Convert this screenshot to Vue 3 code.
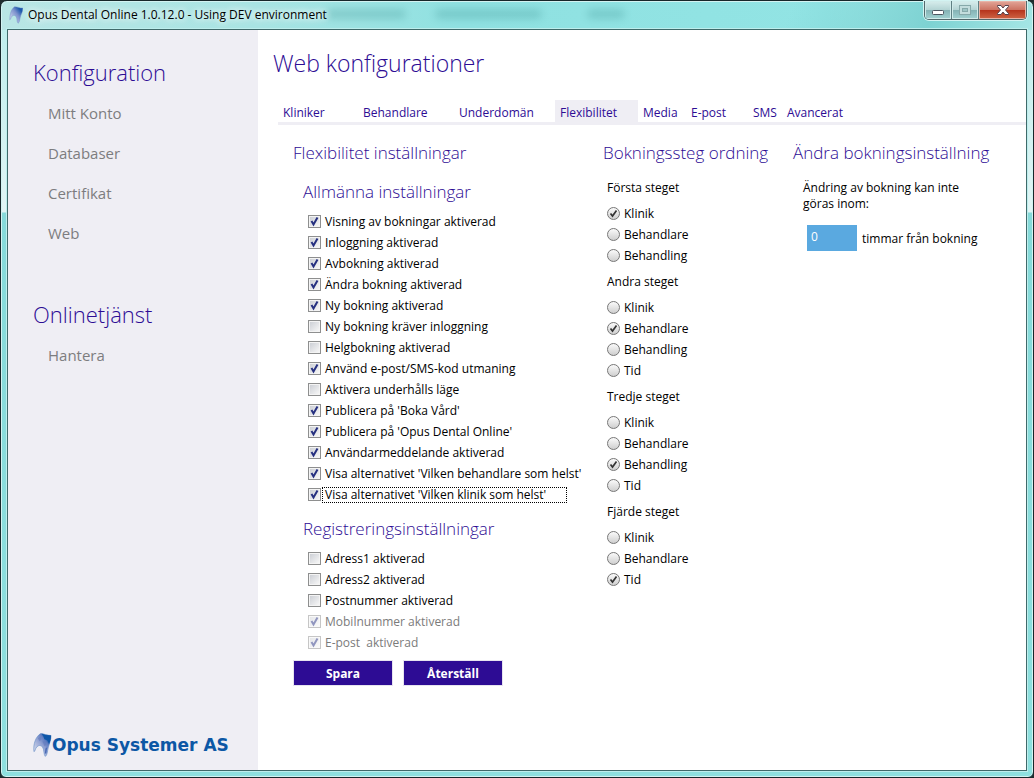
<script setup>
import { reactive, ref } from 'vue'

const menu = [
  { title: 'Konfiguration', items: ['Mitt Konto', 'Databaser', 'Certifikat', 'Web'] },
  { title: 'Onlinetjänst', items: ['Hantera'] },
]

const tabs = [
  { name: 'Kliniker', size: 'w80' },
  { name: 'Behandlare', size: 'w96' },
  { name: 'Underdomän', size: 'w101' },
  { name: 'Flexibilitet', size: 'w83' },
  { name: 'Media', size: 'w48' },
  { name: 'E-post', size: 'w62' },
  { name: 'SMS', size: 'w34' },
  { name: 'Avancerat', size: 'w80' },
]
const activeTab = ref('Flexibilitet')

const general = reactive([
  { label: 'Visning av bokningar aktiverad', on: true },
  { label: 'Inloggning aktiverad', on: true },
  { label: 'Avbokning aktiverad', on: true },
  { label: 'Ändra bokning aktiverad', on: true },
  { label: 'Ny bokning aktiverad', on: true },
  { label: 'Ny bokning kräver inloggning', on: false },
  { label: 'Helgbokning aktiverad', on: false },
  { label: 'Använd e-post/SMS-kod utmaning', on: true },
  { label: 'Aktivera underhålls läge', on: false },
  { label: "Publicera på 'Boka Vård'", on: true },
  { label: "Publicera på 'Opus Dental Online'", on: true },
  { label: 'Användarmeddelande aktiverad', on: true },
  { label: "Visa alternativet 'Vilken behandlare som helst'", on: true },
  { label: "Visa alternativet 'Vilken klinik som helst'", on: true, focused: true },
])

const registration = reactive([
  { label: 'Adress1 aktiverad', on: false },
  { label: 'Adress2 aktiverad', on: false },
  { label: 'Postnummer aktiverad', on: false },
  { label: 'Mobilnummer aktiverad', on: true, disabled: true },
  { label: 'E-post  aktiverad', on: true, disabled: true },
])

const steps = reactive([
  { title: 'Första steget', options: ['Klinik', 'Behandlare', 'Behandling'], value: 'Klinik' },
  { title: 'Andra steget', options: ['Klinik', 'Behandlare', 'Behandling', 'Tid'], value: 'Behandlare' },
  { title: 'Tredje steget', options: ['Klinik', 'Behandlare', 'Behandling', 'Tid'], value: 'Behandling' },
  { title: 'Fjärde steget', options: ['Klinik', 'Behandlare', 'Tid'], value: 'Tid' },
])

const hours = ref('0')
</script>

<template>
  <div class="window">
    <header class="titlebar">
      <div class="ghosts" aria-hidden="true"><i class="g1"></i><i class="g2"></i><i class="g3"></i></div>
      <svg class="app-icon" viewBox="0 0 20 26" aria-hidden="true">
        <defs>
          <linearGradient id="enamel-small" x1="0" y1="1" x2="1" y2="0">
            <stop offset="0.2" stop-color="#c3cdea" />
            <stop offset="0.55" stop-color="#7d92cd" />
            <stop offset="0.8" stop-color="#1c58ac" />
          </linearGradient>
        </defs>
        <path d="M1 20C1 12 3 4 8 1C12 1 15 3 20 3C20 9 17 12 16 17C15 21 15 24 13 25C11 23 12 18 10 15C8 13 6 13 4 15C2 17 3 19 1 20Z" fill="url(#enamel-small)" stroke="#6d8cc4" stroke-width="0.6" />
      </svg>
      <span class="title">Opus Dental Online 1.0.12.0 - Using DEV environment</span>
      <div class="controls">
        <button type="button" class="min" aria-label="Minimera">
          <svg viewBox="0 0 14 14"><rect x="1.500" y="7.500" width="11" height="4" rx="1" fill="#fff" stroke="#4c5560" /></svg>
        </button>
        <button type="button" class="max" aria-label="Maximera" disabled>
          <svg viewBox="0 0 14 14"><rect x="1.500" y="2.500" width="11" height="9" fill="#c3dddd" stroke="#86a9aa" /><rect x="4.500" y="5.500" width="5" height="3" fill="#9ec5c5" stroke="#86a9aa" /></svg>
        </button>
        <button type="button" class="close" aria-label="Stäng">
          <svg viewBox="0 0 14 14"><path d="M1.500 2.500H5L7 5L9 2.500H12.500V3.500L9.500 7L12.500 10.500V11.500H9L7 9L5 11.500H1.500V10.500L4.500 7L1.500 3.500Z" fill="#fff" stroke="#54414c" /></svg>
        </button>
      </div>
    </header>

    <div class="client">
      <nav class="sidebar">
        <section v-for="group in menu" :key="group.title">
          <h2>{{ group.title }}</h2>
          <ul>
            <li v-for="item in group.items" :key="item"><a href="#">{{ item }}</a></li>
          </ul>
        </section>
        <div class="logo">
          <svg viewBox="0 0 20 26" aria-hidden="true">
            <defs>
              <linearGradient id="enamel" x1="0" y1="1" x2="1" y2="0">
                <stop offset="0.2" stop-color="#c9d0e8" />
                <stop offset="0.5" stop-color="#8fa0d2" />
                <stop offset="0.68" stop-color="#5f7cc0" />
                <stop offset="0.8" stop-color="#0d56a8" />
              </linearGradient>
            </defs>
            <path d="M1 20C0 12 3 4 8 1C11 1 15 3 19 3C19 8 17 12 16 16C15 20 15 24 13 25C11 23 12 18 10 15C8 13 6 13 4 15C2 17 3 19 1 20Z" fill="url(#enamel)" stroke="#6d93c8" stroke-width="0.7" />
            <path d="M9 1C12 3 16 3 19 3C19 7 18 9 17 12L15 8L12 7L11 4Z" fill="#0d56a8" />
            <path d="M5 6L8 4L9 7L7 9ZM10 9L13 9L14 13L12 14Z" fill="#6279bd" opacity="0.6" />
            <path d="M13 17L15 15L14 22L12.500 22Z" fill="#4a6bb5" />
          </svg>
          <span>Opus Systemer AS</span>
        </div>
      </nav>

      <main>
        <h1>Web konfigurationer</h1>
        <div class="tabs" role="tablist">
          <button
            v-for="tab in tabs"
            :key="tab.name"
            type="button"
            role="tab"
            :class="[tab.size, { active: tab.name === activeTab }]"
            :aria-selected="tab.name === activeTab"
            @click="activeTab = tab.name"
          >{{ tab.name }}</button>
        </div>

        <div class="panels">
          <section>
            <h3>Flexibilitet inställningar</h3>
            <div class="group">
              <h3>Allmänna inställningar</h3>
              <div class="checks">
                <label v-for="c in general" :key="c.label" :class="{ focused: c.focused }">
                  <input v-model="c.on" type="checkbox" /><span>{{ c.label }}</span>
                </label>
              </div>
              <h3 class="second">Registreringsinställningar</h3>
              <div class="checks">
                <label v-for="c in registration" :key="c.label" :class="{ disabled: c.disabled }">
                  <input v-model="c.on" type="checkbox" :disabled="c.disabled" /><span>{{ c.label }}</span>
                </label>
              </div>
            </div>
            <div class="actions">
              <button type="button">Spara</button>
              <button type="button">Återställ</button>
            </div>
          </section>

          <section>
            <h3>Bokningssteg ordning</h3>
            <div class="steps">
              <fieldset v-for="(step, i) in steps" :key="step.title">
                <legend>{{ step.title }}</legend>
                <label v-for="o in step.options" :key="o">
                  <input v-model="step.value" type="radio" :name="'step' + i" :value="o" /><span>{{ o }}</span>
                </label>
              </fieldset>
            </div>
          </section>

          <section>
            <h3>Ändra bokningsinställning</h3>
            <div class="limit">
              <p>Ändring av bokning kan inte göras inom:</p>
              <label><input v-model="hours" type="text" /><span>timmar från bokning</span></label>
            </div>
          </section>
        </div>
      </main>
    </div>
  </div>
</template>

<style>
body {
  background: #1f2c2e;
}
</style>

<style scoped>
* {
  box-sizing: border-box;
}
.window {
  display: flex;
  flex-direction: column;
  min-height: 100vh;
  padding: 0 6px 6px;
  border: 1px solid #17272a;
  border-radius: 7px 7px 6px 6px;
  box-shadow: inset 0 0 0 1px #d3f3f2;
  background:
    linear-gradient(115deg, transparent 0 720px, #7dd2d2 850px, #abe9e8 960px, transparent 1040px) top / 100% 29px no-repeat,
    linear-gradient(90deg, #b9e6e5, #a8e4e3 25%, #8fe1e1 45%, #92e4e4 80%, #b5eeec) top / 100% 29px no-repeat,
    linear-gradient(#b9eceb, #e1f5f5 211px, #86dada 212px, #8ee0df);
  color: #000;
  font: 12px/16px "Open Sans", "Noto Sans", sans-serif;
}
.titlebar {
  position: relative;
  display: flex;
  align-items: center;
  gap: 5px;
  height: 28px;
  padding-left: 2px;
}
.title {
  position: relative;
  text-shadow: 0 0 6px #fff, 0 0 8px #fff;
}
.app-icon {
  position: relative;
  width: 14px;
  height: 18px;
}
.ghosts {
  position: absolute;
  inset: 0;
}
.ghosts i {
  position: absolute;
  top: 9px;
  height: 8px;
  background: #2f8585;
  opacity: 0.3;
  filter: blur(4px);
}
.ghosts .g1 {
  left: 320px;
  width: 78px;
}
.ghosts .g2 {
  left: 429px;
  width: 105px;
}
.ghosts .g3 {
  left: 581px;
  width: 36px;
}
.controls {
  position: relative;
  display: flex;
  align-self: flex-start;
  height: 19px;
  margin-left: auto;
  border: 1px solid #52696c;
  border-top: 0;
  border-radius: 0 0 5px 5px;
  box-shadow: 0 0 0 1px #d3f3f2;
  overflow: hidden;
}
.controls button {
  display: flex;
  align-items: center;
  justify-content: center;
  width: 27px;
  padding: 0;
  border: 0;
  border-right: 1px solid #5f8083;
  background: linear-gradient(#d8eeed, #b4d4d4 48%, #85b3b5 52%, #a2d2d2);
  box-shadow: inset 0 0 0 1px #d0ebea;
}
.controls .close {
  width: 47px;
  border-right: 0;
  background: linear-gradient(#e3a699, #cc7463 48%, #b6341d 52%, #cf6545);
  box-shadow: inset 0 0 0 1px #e7b4a8;
}
.controls svg {
  width: 14px;
  height: 14px;
}
.client {
  position: relative;
  display: flex;
  flex: 1;
  border: 1px solid #3f6a6a;
  box-shadow: 0 0 0 1px #bdeeed;
  background: #fff;
}
.sidebar {
  display: flex;
  flex-direction: column;
  flex: none;
  width: 250px;
  padding: 26px 16px 12px 25px;
  background: #efeef4;
}
h1,
h2,
h3,
p,
ul {
  margin: 0;
  padding: 0;
}
h1,
h2 {
  color: #2d0c94;
  font-size: 23px;
  font-weight: 300;
  line-height: 32px;
}
h2 {
  font-size: 22px;
}
h3 {
  color: #2d0c94;
  font-size: 17px;
  font-weight: 300;
  line-height: 24px;
}
.sidebar section {
  margin-bottom: 45px;
}
ul {
  padding: 5px 0 0 15px;
  list-style: none;
}
li {
  font-size: 15px;
  line-height: 40px;
}
li a {
  color: #7d7d7f;
  text-decoration: none;
}
.logo {
  display: flex;
  align-items: center;
  margin-top: auto;
  color: #0c57a5;
  font: bold 17px/26px "DejaVu Sans", sans-serif;
  white-space: nowrap;
}
.logo svg {
  flex: none;
  width: 19px;
  height: 26px;
}
main {
  flex: 1;
  min-width: 0;
  padding-top: 17px;
}
h1 {
  padding-left: 15px;
}
.tabs {
  display: flex;
  margin: 21px 0 0 20px;
  border-bottom: 3px solid #efeef4;
}
.tabs button {
  height: 22px;
  padding: 4px 0 0 5px;
  border: 0;
  background: none;
  color: #2d0c94;
  font: inherit;
  text-align: left;
  white-space: nowrap;
}
.tabs .active {
  background: #efeef4;
}
.w80 {
  width: 80px;
}
.w96 {
  width: 96px;
}
.w101 {
  width: 101px;
}
.w83 {
  width: 83px;
}
.w48 {
  width: 48px;
}
.w62 {
  width: 62px;
}
.w34 {
  width: 34px;
}
.panels {
  display: grid;
  grid-template-columns: 310px 190px 1fr;
  padding: 16px 0 0 35px;
  white-space: nowrap;
}
.group {
  padding: 15px 0 0 10px;
}
.second {
  margin-top: 12px;
}
.checks {
  display: flex;
  flex-direction: column;
  align-items: flex-start;
  padding: 7px 0 0 5px;
}
.checks label {
  display: flex;
  align-items: center;
  height: 21px;
  white-space: pre;
}
.checks span {
  padding: 0 1px 0 2px;
  border: 1px dotted transparent;
  line-height: 14px;
}
.checks .focused span {
  min-width: 245px;
  border-color: #000;
}
.disabled {
  color: #7b7b7b;
}
input {
  appearance: none;
  flex: none;
  margin: 0;
}
.checks input {
  width: 13px;
  height: 13px;
  border: 1px solid #8e8f8f;
  background: linear-gradient(135deg, #cdd0d6, #f6f6f6) content-box, #f4f4f4;
  padding: 1px;
  margin-right: 1px;
}
.checks input:checked {
  background:
    url("data:image/svg+xml,%3Csvg xmlns='http://www.w3.org/2000/svg' viewBox='0 0 11 11'%3E%3Cpath d='M2.500 5L4.500 8.500L8.500 1.500' fill='none' stroke='%23263080' stroke-width='2'/%3E%3C/svg%3E") border-box center / 11px 11px no-repeat,
    linear-gradient(135deg, #cdd0d6, #f6f6f6) content-box,
    #f4f4f4;
}
.checks input:disabled {
  opacity: 0.5;
}
.actions {
  display: flex;
  gap: 10px;
  padding-top: 7px;
}
.actions button {
  width: 100px;
  height: 26px;
  padding: 2px 0 0;
  border: 1px solid #e6e4ef;
  background: #2d0c94;
  color: #fff;
  font: inherit;
  font-weight: 700;
}
.steps {
  display: flex;
  flex-direction: column;
  gap: 8px;
  padding: 15px 0 0 4px;
}
fieldset {
  margin: 0;
  padding: 0;
  border: 0;
}
legend {
  padding: 0 0 7px;
}
fieldset label {
  display: flex;
  align-items: center;
  gap: 4px;
  height: 21px;
}
fieldset input {
  width: 13px;
  height: 13px;
  border: 1px solid #777;
  border-radius: 50%;
  background: linear-gradient(#fafafa, #cfcfcf);
}
fieldset input:checked {
  background:
    url("data:image/svg+xml,%3Csvg xmlns='http://www.w3.org/2000/svg' viewBox='0 0 11 11'%3E%3Cpath d='M2.500 5.500L4.500 8L8.500 2.500' fill='none' stroke='%23333' stroke-width='1.700'/%3E%3C/svg%3E") center / 11px 11px no-repeat,
    linear-gradient(#fafafa, #cfcfcf);
}
.limit {
  padding: 15px 0 0 10px;
}
.limit p {
  width: 170px;
  white-space: normal;
}
.limit label {
  display: flex;
  align-items: center;
  gap: 5px;
  padding: 13px 0 0 4px;
}
.limit span {
  padding-top: 2px;
}
.limit input {
  width: 50px;
  height: 26px;
  padding: 0 4px 4px;
  border: 0;
  background: #5aa9e0;
  color: #fff;
  font: inherit;
}
</style>
